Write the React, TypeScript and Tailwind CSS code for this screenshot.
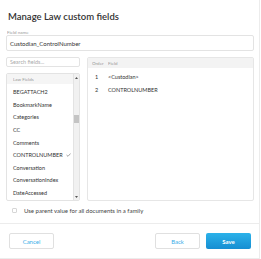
import React from "react";

const items = [
  "BEGATTACH2",
  "BookmarkName",
  "Categories",
  "CC",
  "Comments",
  "CONTROLNUMBER",
  "Conversation",
  "ConversationIndex",
  "DateAccessed",
];

export default function App() {
  return (
    <div className="w-[261px] h-[259px] bg-white" style={{ fontFamily: "Lato, 'Open Sans', sans-serif" }}>
      <div className="w-[260px] h-[259px] border-r border-b border-[#ececec] flex flex-col">
        <div className="pl-[8px] pt-[11px] h-[29px] text-[9.5px] leading-[11px] font-semibold text-[#333]">
          Manage Law custom fields
        </div>
        <div className="pl-[7px] h-[6px] flex items-center">
          <span className="text-[6px] leading-[6px] text-[#999] scale-[0.75] origin-left inline-block whitespace-nowrap">Field name</span>
        </div>
        <div className="ml-[6px] mt-[0px] w-[248px] h-[16px] border border-[#e3e3e3] rounded-[2px] flex items-center pl-[3px] text-[6px] text-[#333]">
          Custodian_ControlNumber
        </div>
        <div className="flex ml-[6px] mt-[6px] gap-[7px] h-[144px]">
          <div className="w-[74px] flex flex-col">
            <div className="h-[10px] border border-[#e3e3e3] rounded-[2px] flex items-center pl-[3px] text-[5.5px] text-[#aaa]">
              Search fields...
            </div>
            <div className="mt-[6px] flex-1 border border-[#e3e3e3] rounded-[2px] flex overflow-hidden">
              <div className="flex-1 flex flex-col">
                <div className="h-[10px] bg-[#f5f5f5] flex items-center pl-[6px]">
                  <span className="text-[6px] text-[#999] scale-[0.75] origin-left inline-block whitespace-nowrap">Law Fields</span>
                </div>
                <div className="pt-[2px]">
                  {items.map((it) => (
                    <div key={it} className="h-[12.6px] flex items-center pl-[6px] text-[5.5px] text-[#333]">
                      <span>{it}</span>
                      {it === "CONTROLNUMBER" && (
                        <svg width="5" height="4" viewBox="0 0 5 4" className="ml-[3px]">
                          <path d="M0.5 2 L2 3.3 L4.6 0.5" fill="none" stroke="#666" strokeWidth="0.6" />
                        </svg>
                      )}
                    </div>
                  ))}
                </div>
              </div>
              <div className="w-[6px] bg-[#f1f1f1] border-l border-[#e3e3e3] flex flex-col items-center">
                <div className="h-[8px] flex items-center justify-center">
                  <svg width="3" height="2" viewBox="0 0 3 2"><path d="M0 2 L1.5 0 L3 2 Z" fill="#555" /></svg>
                </div>
                <div className="mt-[33px] w-[5px] h-[8px] bg-[#c4c4c4]" />
                <div className="flex-1" />
                <div className="h-[7px] flex items-center justify-center">
                  <svg width="3" height="2" viewBox="0 0 3 2"><path d="M0 0 L1.5 2 L3 0 Z" fill="#555" /></svg>
                </div>
              </div>
            </div>
          </div>
          <div className="w-[167px] border border-[#e6e6e6] rounded-[2px] flex flex-col">
            <div className="h-[10px] bg-[#f3f3f3] flex items-center text-[6px] text-[#999]">
              <div className="w-[20px] pl-[4px]">
                <span className="scale-[0.75] origin-left inline-block whitespace-nowrap">Order</span>
              </div>
              <div>
                <span className="scale-[0.75] origin-left inline-block whitespace-nowrap">Field</span>
              </div>
            </div>
            <div className="pt-[3px]">
              {[["1", "<Custodian>"], ["2", "CONTROLNUMBER"]].map(([o, f]) => (
                <div key={o} className="h-[13px] flex items-center text-[5.5px] text-[#333]">
                  <div className="w-[20px] pl-[7px]">{o}</div>
                  <div>{f}</div>
                </div>
              ))}
            </div>
          </div>
        </div>
        <div className="flex items-center ml-[12px] mt-[6px] h-[6px]">
          <div className="w-[5px] h-[5px] border border-[#d6d6d6] rounded-[1px]" />
          <div className="ml-[7px] text-[6px] text-[#444]">Use parent value for all documents in a family</div>
        </div>
        <div className="mt-[10px] h-px bg-[#ececec]" />
        <div className="flex items-center mt-[9px] px-[9px]">
          <div className="w-[45px] h-[16px] border border-[#e0e0e0] rounded-[2px] flex items-center justify-center text-[6px] text-[#3aaee8]">
            Cancel
          </div>
          <div className="flex-1" />
          <div className="w-[45px] h-[16px] border border-[#e0e0e0] rounded-[2px] flex items-center justify-center text-[6px] text-[#3aaee8]">
            Back
          </div>
          <div className="ml-[6px] mr-[-1px] w-[45px] h-[16px] rounded-[2px] flex items-center justify-center text-[6px] font-bold text-white bg-gradient-to-b from-[#2bb2ea] to-[#168ed2]">
            Save
          </div>
        </div>
      </div>
    </div>
  );
}
